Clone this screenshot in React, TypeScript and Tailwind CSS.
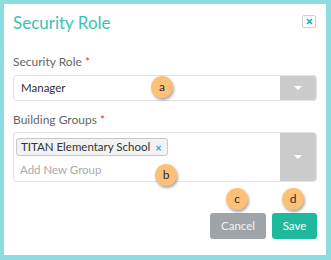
import React from 'react';

function Badge({ letter }: { letter: string }) {
  return (
    <span className="absolute flex h-[22px] w-[22px] items-center justify-center rounded-full bg-[#fdc077] text-[12px] text-[#2b2b3a] shadow-[1px_2px_3px_rgba(0,0,0,0.35)]">
      {letter}
    </span>
  );
}

function Caret() {
  return <span className="h-0 w-0 border-x-[4px] border-t-[4px] border-x-transparent border-t-white" />;
}

export default function App() {
  return (
    <div className="h-[260px] w-[331px] bg-[#8ddde0] p-[4px] pr-[5px] pb-[5px]" style={{ fontFamily: 'Lato, "Open Sans", sans-serif' }}>
      <div className="relative h-full w-full bg-white px-[9px] pt-[7px]">
        <div className="flex items-start justify-between">
          <h1 className="text-[17px] leading-[24px] text-[#3cc3b0]">Security Role</h1>
          <button className="mt-[4px] mr-[1px] flex h-[13px] w-[14px] items-center justify-center rounded-[2px] border border-[#cfcfcf] bg-white">
            <svg width="7" height="7" viewBox="0 0 7 7">
              <path d="M1 1L6 6M6 1L1 6" stroke="#22a5db" strokeWidth="1.6" />
            </svg>
          </button>
        </div>

        <div className="mt-[19px] text-[12px] leading-[16px] text-[#666]">
          Security Role <span className="text-[#e0403a]">*</span>
        </div>
        <div className="relative mt-[5px] flex h-[26px] rounded-[3px] border border-[#e2e2e2]">
          <div className="flex flex-1 items-center pl-[7px] text-[11.5px] text-[#333]">Manager</div>
          <div className="flex w-[36px] items-center justify-center rounded-r-[3px] bg-[#cbcbcb]">
            <Caret />
          </div>
          <div className="absolute left-[137px] top-[0px]">
            <Badge letter="a" />
          </div>
        </div>

        <div className="mt-[11px] text-[12px] leading-[16px] text-[#666]">
          Building Groups <span className="text-[#e0403a]">*</span>
        </div>
        <div className="relative mt-[4px] flex h-[50px] rounded-[3px] border border-[#e2e2e2]">
          <div className="flex flex-1 flex-col pl-[2px] pt-[5px]">
            <div className="flex h-[18px] w-fit items-center gap-[5px] rounded-[3px] border border-[#c8c8c8] bg-[#f2f2f2] pl-[4px] pr-[5px] text-[11.5px] text-[#333]">
              TITAN Elementary School
              <span className="text-[11px] font-bold leading-none text-[#22a5db]">×</span>
            </div>
            <div className="mt-[5px] pl-[4px] text-[11.5px] text-[#aaa]">Add New Group</div>
          </div>
          <div className="flex w-[36px] items-center justify-center rounded-r-[3px] bg-[#cbcbcb]">
            <Caret />
          </div>
          <div className="absolute left-[141px] top-[31px]">
            <Badge letter="b" />
          </div>
        </div>

        <div className="relative mt-[31px] flex justify-end gap-[6px]">
          <button className="h-[26px] w-[56px] rounded-[3px] bg-[#9ea4a8] text-[11.5px] text-[#f3f3f3]">Cancel</button>
          <button className="h-[26px] w-[45px] rounded-[3px] bg-[#1fb99e] text-[11.5px] text-white">Save</button>
          <div className="absolute left-[213px] top-[-25px]">
            <Badge letter="c" />
          </div>
          <div className="absolute left-[269px] top-[-25px]">
            <Badge letter="d" />
          </div>
        </div>
      </div>
    </div>
  );
}
